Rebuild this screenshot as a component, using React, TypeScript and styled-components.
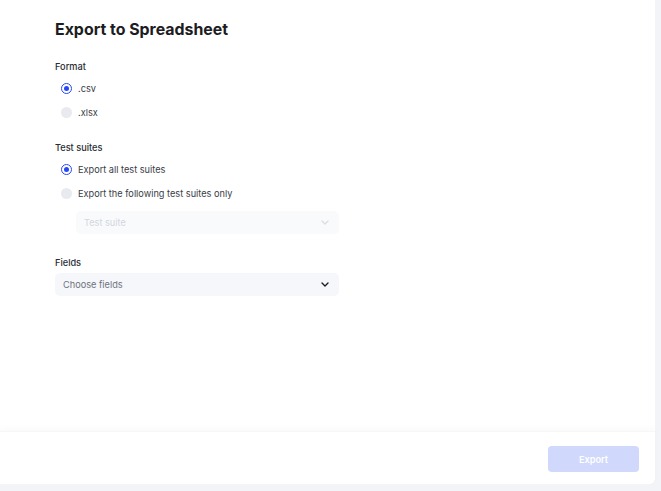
import React from 'react';
import styled, { createGlobalStyle } from 'styled-components';

const GlobalStyle = createGlobalStyle`
  html, body {
    margin: 0;
    padding: 0;
    background: #f3f4f8;
    font-family: Inter, "Noto Sans", sans-serif;
  }
`;

const Panel = styled.div`
  width: 655px;
  height: 484px;
  background: #ffffff;
  border-radius: 0 0 6px 0;
  display: flex;
  flex-direction: column;
`;

const Content = styled.div`
  flex: 1;
  padding: 20px 55px 0;
`;

const Title = styled.h2`
  margin: 0 0 21px;
  font-size: 15.9px;
  line-height: 20px;
  font-weight: 700;
  color: #1c1d22;
`;

const Section = styled.div`
  margin-bottom: 23px;
`;

const Label = styled.div<{ tight?: boolean }>`
  font-size: 9.2px;
  line-height: 12px;
  font-weight: 500;
  color: #2a2c33;
  margin-bottom: ${p => (p.tight ? 4 : 8)}px;
`;

const Options = styled.div`
  display: flex;
  flex-direction: column;
  gap: 10px;
  padding-left: 6px;
`;

const Option = styled.label`
  display: flex;
  align-items: center;
  gap: 6px;
  height: 14px;
  font-size: 9.2px;
  color: #3a3d46;
`;

const Radio = styled.span<{ checked?: boolean }>`
  width: 11px;
  height: 11px;
  border-radius: 50%;
  box-sizing: border-box;
  background: ${p => (p.checked ? '#ffffff' : '#e9eaef')};
  border: ${p => (p.checked ? '1.5px solid #2747f5' : 'none')};
  display: flex;
  align-items: center;
  justify-content: center;

  &::after {
    content: '';
    display: ${p => (p.checked ? 'block' : 'none')};
    width: 5px;
    height: 5px;
    border-radius: 50%;
    background: #2747f5;
  }
`;

const Select = styled.div<{ disabled?: boolean; indent?: number }>`
  margin-left: ${p => p.indent || 0}px;
  width: ${p => 284 - (p.indent || 0)}px;
  height: 23px;
  box-sizing: border-box;
  border-radius: 5px;
  background: ${p => (p.disabled ? '#f9fafc' : '#f6f7fa')};
  display: flex;
  align-items: center;
  justify-content: space-between;
  padding: 0 10px 0 8px;
  font-size: 9.2px;
  color: ${p => (p.disabled ? '#d4d6dd' : '#6f7280')};
`;

const SuiteSelect = styled(Select)`
  margin-top: 11px;
`;

const Footer = styled.div`
  height: 52px;
  box-shadow: 0 -3px 6px rgba(30, 35, 60, 0.025);
  border-top: 1px solid #f6f7f9;
  display: flex;
  align-items: center;
  justify-content: flex-end;
  padding-right: 16px;
`;

const ExportButton = styled.button`
  width: 91px;
  height: 26px;
  border: none;
  border-radius: 4px;
  background: #d0d9fc;
  color: #ffffff;
  font-family: Inter, sans-serif;
  font-size: 9.2px;
  font-weight: 600;
  margin-top: 2px;
`;

const Chevron: React.FC<{ color: string }> = ({ color }) => (
  <svg width="8" height="5" viewBox="0 0 8 5" fill="none">
    <path d="M1 1l3 3 3-3" stroke={color} strokeWidth="1.4" strokeLinecap="round" strokeLinejoin="round" />
  </svg>
);

export default function App() {
  return (
    <>
      <GlobalStyle />
      <Panel>
        <Content>
          <Title>Export to Spreadsheet</Title>
          <Section>
            <Label>Format</Label>
            <Options>
              <Option><Radio checked />.csv</Option>
              <Option><Radio />.xlsx</Option>
            </Options>
          </Section>
          <Section>
            <Label>Test suites</Label>
            <Options>
              <Option><Radio checked />Export all test suites</Option>
              <Option><Radio />Export the following test suites only</Option>
            </Options>
            <SuiteSelect disabled indent={21}>
              Test suite
              <Chevron color="#dcdee4" />
            </SuiteSelect>
          </Section>
          <Section>
            <Label tight>Fields</Label>
            <Select>
              Choose fields
              <Chevron color="#1c1d22" />
            </Select>
          </Section>
        </Content>
        <Footer>
          <ExportButton>Export</ExportButton>
        </Footer>
      </Panel>
    </>
  );
}
